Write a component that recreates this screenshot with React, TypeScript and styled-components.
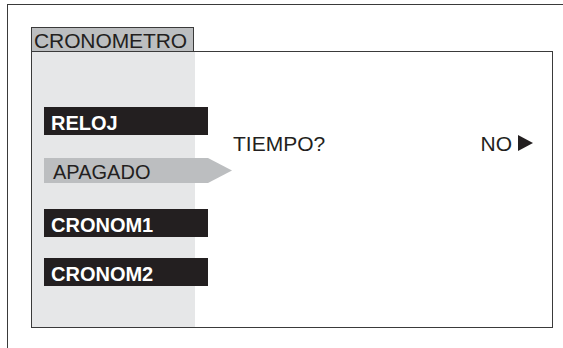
import React from "react";
import styled, { createGlobalStyle } from "styled-components";

const GlobalStyle = createGlobalStyle`
  html, body {
    margin: 0;
    padding: 0;
    background: #ffffff;
    font-family: "Liberation Sans", Arial, Helvetica, sans-serif;
    color: #231f20;
    overflow: hidden;
  }
`;

const Frame = styled.div`
  box-sizing: border-box;
  margin: 4px 0 0 7px;
  height: 344px;
  border-top: 1px solid #3a3a3a;
  border-left: 1px solid #3a3a3a;
  padding: 22px 0 0 23px;
  display: flex;
  flex-direction: column;
  align-items: flex-start;
`;

const Tab = styled.div`
  box-sizing: border-box;
  width: 163px;
  height: 24px;
  background: #bcbec0;
  border: 1px solid #3a3a3a;
  border-bottom: none;
  font-size: 21px;
  line-height: 23px;
  padding: 1px 0 0 2px;
  letter-spacing: -0.1px;
  white-space: nowrap;
`;

const Screen = styled.div`
  box-sizing: border-box;
  width: 522px;
  height: 277px;
  border: 1px solid #3a3a3a;
  display: grid;
  grid-template-columns: 163px 1fr;
`;

const Menu = styled.div`
  background: #e6e7e8;
  padding: 55px 0 0 12px;
  display: flex;
  flex-direction: column;
  align-items: flex-start;
  overflow: visible;
  position: relative;
  z-index: 1;
`;

const Item = styled.div<{ $mt: number; $selected?: boolean }>`
  box-sizing: border-box;
  margin-top: ${(p) => p.$mt}px;
  width: ${(p) => (p.$selected ? 188 : 164)}px;
  height: ${(p) => (p.$selected ? 25 : 28)}px;
  padding: ${(p) => (p.$selected ? "2px 0 0 9px" : "4px 0 0 7px")};
  font-size: 20px;
  line-height: 24px;
  font-weight: ${(p) => (p.$selected ? 400 : 700)};
  color: ${(p) => (p.$selected ? "#231f20" : "#ffffff")};
  background: ${(p) => (p.$selected ? "#bcbec0" : "#231f20")};
  clip-path: ${(p) =>
    p.$selected
      ? "polygon(0 0, 164px 0, 100% 50%, 164px 100%, 0 100%)"
      : "none"};
  white-space: nowrap;
`;

const Content = styled.div`
  padding: 80px 19px 0 38px;
`;

const QuestionRow = styled.div`
  display: flex;
  justify-content: space-between;
  align-items: flex-start;
  font-size: 21px;
  line-height: 24px;
  white-space: nowrap;
`;

const Value = styled.div`
  display: flex;
  align-items: flex-start;
  gap: 6px;
`;

const Arrow = styled.svg`
  display: block;
  margin-top: 3px;
`;

const items = [
  { label: "RELOJ", mt: 0 },
  { label: "APAGADO", mt: 23, selected: true },
  { label: "CRONOM1", mt: 26 },
  { label: "CRONOM2", mt: 21 },
];

export default function App() {
  return (
    <>
      <GlobalStyle />
      <Frame>
        <Tab>CRONOMETRO</Tab>
        <Screen>
          <Menu>
            {items.map((it) => (
              <Item key={it.label} $mt={it.mt} $selected={it.selected}>
                {it.label}
              </Item>
            ))}
          </Menu>
          <Content>
            <QuestionRow>
              <span>TIEMPO?</span>
              <Value>
                <span>NO</span>
                <Arrow width="15" height="16" viewBox="0 0 15 16">
                  <polygon points="0,0 15,8 0,16" fill="#231f20" />
                </Arrow>
              </Value>
            </QuestionRow>
          </Content>
        </Screen>
      </Frame>
    </>
  );
}
